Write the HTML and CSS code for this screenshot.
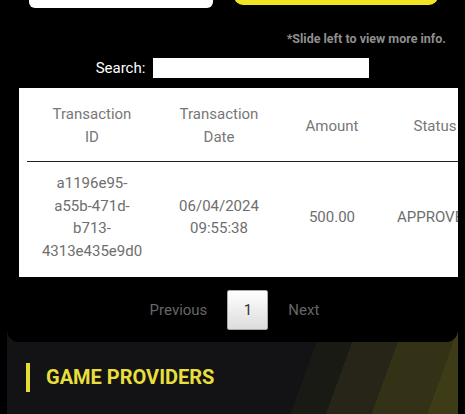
FILE: index.html
```html
<!DOCTYPE html>
<html>
<head>
    <title>Transaction History</title>
    <link rel="stylesheet" href="styles.css">
</head>
<body>
    <div class="top-buttons">
        <button class="btn btn-light" aria-label="Reset"></button>
        <button class="btn btn-yellow" aria-label="Submit"></button>
    </div>

    <div class="history-panel">
        <p class="slide-note">*Slide left to view more info.</p>

        <div class="search-row">
            <label for="searchInput">Search:</label>
            <input type="text" id="searchInput">
        </div>

        <div class="table-wrap">
            <table class="history-table">
                <colgroup>
                    <col class="col-id">
                    <col class="col-date">
                    <col class="col-amount">
                    <col class="col-status">
                </colgroup>
                <thead>
                    <tr>
                        <th>Transaction<br>ID</th>
                        <th>Transaction<br>Date</th>
                        <th>Amount</th>
                        <th>Status</th>
                    </tr>
                </thead>
                <tbody>
                    <tr>
                        <td>a1196e95-<br>a55b-471d-<br>b713-<br>4313e435e9d0</td>
                        <td>06/04/2024<br>09:55:38</td>
                        <td>500.00</td>
                        <td>APPROVED</td>
                    </tr>
                </tbody>
            </table>
        </div>

        <div class="pagination">
            <a class="page-link">Previous</a>
            <a class="page-btn current">1</a>
            <a class="page-link">Next</a>
        </div>
    </div>

    <div class="providers">
        <h2 class="section-title">GAME PROVIDERS</h2>
    </div>
</body>
</html>
```

FILE: styles.css
```css
body {
    background-color: #000;
    font-family: Roboto, "Liberation Sans", Arial, sans-serif;
    margin: 0;
    padding: 0;
    overflow: hidden;
}

.top-buttons {
    display: flex;
    align-items: flex-start;
    gap: 21px;
    padding-left: 29px;
    margin-top: -32px;
}

.btn {
    border: none;
    cursor: pointer;
}

.btn-light {
    width: 184px;
    height: 40px;
    background-color: #fff;
    border-radius: 6px;
}

.btn-yellow {
    width: 204px;
    height: 37px;
    background-color: #f2e423;
    border-radius: 9px;
}

.history-panel {
    position: relative;
    z-index: 1;
    margin: 0 7px;
    background-color: #000;
    border-radius: 0 0 12px 12px;
    padding-bottom: 12px;
}

.slide-note {
    margin: 23px 12px 0 0;
    text-align: right;
    font-size: 12.5px;
    font-weight: bold;
    color: #8f8f8f;
    line-height: 16px;
}

.search-row {
    display: flex;
    justify-content: center;
    align-items: center;
    gap: 8px;
    margin-top: 11px;
}

.search-row label {
    color: #fff;
    font-size: 15px;
}

.search-row input {
    width: 216px;
    height: 20px;
    box-sizing: border-box;
    border: none;
    padding: 0 4px;
    background-color: #fff;
}

.table-wrap {
    margin: 10px 0 0 12px;
    padding: 0 0 4px 8px;
    background-color: #fff;
    overflow: hidden;
}

.history-table {
    table-layout: fixed;
    width: 460px;
    border-collapse: collapse;
    font-size: 15px;
    color: #777;
}

.col-id { width: 130px; }
.col-date { width: 124px; }
.col-amount { width: 102px; }
.col-status { width: 104px; }

.history-table th {
    font-weight: normal;
    line-height: 23px;
    padding: 15px 4px 12px;
    border-bottom: 1px solid #222;
    text-align: center;
}

.history-table td {
    line-height: 22.7px;
    padding: 10px 4px;
    text-align: center;
    white-space: nowrap;
    color: #6e6e6e;
}

.pagination {
    display: flex;
    justify-content: center;
    align-items: center;
    gap: 20px;
    margin-top: 13px;
    font-size: 15px;
    padding-left: 4px;
}

.page-link {
    color: #666;
}

.page-btn {
    width: 41px;
    height: 40px;
    box-sizing: border-box;
    display: flex;
    justify-content: center;
    align-items: center;
    color: #333;
    border: 1px solid #aaa;
    border-radius: 2px;
    background: linear-gradient(to bottom, #fff 0%, #dcdcdc 100%);
}

.providers {
    margin: -12px 7px 0;
    height: 120px;
    padding: 33px 0 0 19px;
    background: linear-gradient(110deg, #131316 0 62%, #1a1a15 62% 69%, #262517 69% 78%, #333216 78% 89%, #3e3c17 89% 100%);
}

.section-title {
    margin: 0;
    border-left: 4px solid #e6dc35;
    padding-left: 16px;
    height: 29px;
    line-height: 29px;
    font-size: 20px;
    font-weight: bold;
    color: #e8df3c;
}
```
